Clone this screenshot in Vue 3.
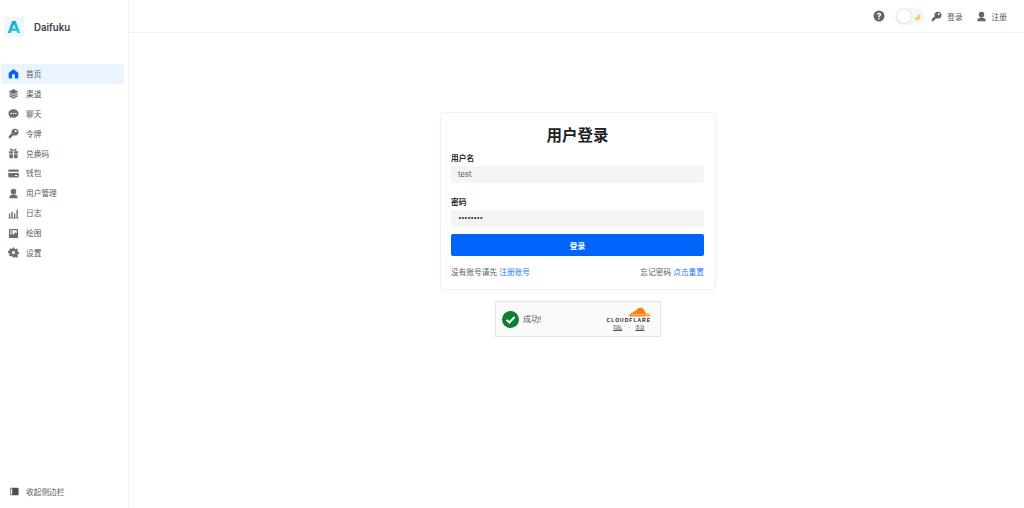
<script setup>
const nav = [
  { label: '首页', icon: 'home', active: true },
  { label: '渠道', icon: 'layers' },
  { label: '聊天', icon: 'chat' },
  { label: '令牌', icon: 'key' },
  { label: '兑换码', icon: 'gift' },
  { label: '钱包', icon: 'card' },
  { label: '用户管理', icon: 'user' },
  { label: '日志', icon: 'chart' },
  { label: '绘图', icon: 'image' },
  { label: '设置', icon: 'gear' },
]
const paths = {
  home: 'M12 2 1.500 11v10.500A1.500 1.500 0 0 0 3 23h6v-7a3 3 0 0 1 6 0v7h6a1.500 1.500 0 0 0 1.500-1.500V11z',
  layers: 'M12 2 1.500 8 12 14 22.500 8zM4.200 11.200 1.500 12.800 12 19l10.500-6.200-2.700-1.600L12 15.800zM4.200 15.900l-2.700 1.600L12 23.500l10.500-6-2.700-1.600L12 20.400z',
  chat: 'M12 2.500C5.900 2.500 1 6.600 1 11.800c0 2.600 1.200 4.900 3.200 6.600L3.500 22.500l4.600-2.100c1.200.4 2.500.6 3.900.6 6.100 0 11-4.100 11-9.200S18.100 2.500 12 2.500zM7 13.500a1.700 1.700 0 1 1 0-3.400 1.700 1.700 0 0 1 0 3.400zm5 0a1.700 1.700 0 1 1 0-3.400 1.700 1.700 0 0 1 0 3.400zm5 0a1.700 1.700 0 1 1 0-3.400 1.700 1.700 0 0 1 0 3.400z',
  key: 'M15 1.500a7.500 7.500 0 0 0-7.100 9.900L1.500 17.800V22.500h4.700v-2.800H9v-2.800h2.600l1-1A7.500 7.500 0 1 0 15 1.500zm2 7.500a2.200 2.200 0 1 1 0-4.400 2.200 2.200 0 0 1 0 4.400z',
  gift: 'M2 7h9v5H2zM13 7h9v5h-9zM3 13.500h8v9H4.500A1.500 1.500 0 0 1 3 21zM13 13.500h8V21a1.500 1.500 0 0 1-1.500 1.500H13zM7.500 1.500c1.800 0 3.500 1.500 4.500 4 1-2.500 2.700-4 4.500-4a2.200 2.200 0 0 1 1 4.200l-1.500.3H7l-1.500-.3a2.200 2.200 0 0 1 2-4.200z',
  card: 'M3 3.500h18A2.500 2.500 0 0 1 23.500 6v2H.5V6A2.500 2.500 0 0 1 3 3.500zM.5 11h23v7a2.500 2.500 0 0 1-2.500 2.500H3A2.500 2.500 0 0 1 .5 18zM15 15v2.500h5V15z',
  user: 'M12 1.500a6 6 0 0 1 6 6.500 6 6 0 0 1-12 0 6 6 0 0 1 6-6.500zM3 22.500V20c0-3 3-5.500 6-5.500h6c3 0 6 2.500 6 5.500v2.500z',
  chart: 'M2 12h3v9H2zM7.500 8h3v13h-3zM13 12h3v9h-3zM18.500 4h3v17h-3zM1 21.500h22v1.500H1z',
  image: 'M3.500 2h17A1.500 1.500 0 0 1 22 3.500v17a1.500 1.500 0 0 1-1.500 1.500h-17A1.500 1.500 0 0 1 2 20.500v-17A1.500 1.500 0 0 1 3.500 2zM5 5v10l4-4 3.500 3.500L16 9l3 3V5zM8 6.500a2 2 0 1 1 0 4 2 2 0 0 1 0-4z',
  gear: 'M10 1h4l.6 2.900 2.100.9 2.500-1.600 2.800 2.800-1.600 2.500.9 2.100 2.900.6v4l-2.900.6-.9 2.100 1.600 2.500-2.800 2.800-2.500-1.600-2.100.9L14 23h-4l-.6-2.900-2.100-.9-2.500 1.600L2 18l1.600-2.500-.9-2.100-2.900-.6v-4l2.900-.6.9-2.100L2 5.600 4.800 2.800l2.500 1.600 2.100-.9zM12 8.500a3.500 3.500 0 1 0 0 7 3.500 3.500 0 0 0 0-7z',
}
</script>

<template>
  <div class="page">
    <aside class="sidebar">
      <div class="brand">
        <div class="logo">
          <svg viewBox="0 0 20 20" width="14" height="14">
            <defs>
              <linearGradient id="lg" x1="0" y1="0" x2="1" y2="1">
                <stop offset="0" stop-color="#1d8fd8" />
                <stop offset="1" stop-color="#22dcd0" />
              </linearGradient>
            </defs>
            <path d="M7.500 1.500h5L19 18.500h-4.400l-1.100-3.200h-7L5.400 18.500H1zM10 6 7.700 12h4.600z" fill="url(#lg)" fill-rule="evenodd" />
          </svg>
        </div>
        <span class="brand-name">Daifuku</span>
      </div>
      <nav class="nav">
        <div v-for="item in nav" :key="item.label" class="nav-item" :class="{ active: item.active }">
          <svg class="nav-icon" viewBox="0 0 24 24" width="11" height="11">
            <path :d="paths[item.icon]" fill="currentColor" fill-rule="evenodd" />
          </svg>
          <span class="nav-text">{{ item.label }}</span>
        </div>
      </nav>
      <div class="collapse">
        <svg viewBox="0 0 12 12" width="9" height="9">
          <path d="M1.500 1h9a1 1 0 0 1 1 1v8a1 1 0 0 1-1 1h-9a1 1 0 0 1-1-1V2a1 1 0 0 1 1-1zM1.500 2v8H3V2z" fill="#4a4f55" fill-rule="evenodd" />
        </svg>
        <span>收起侧边栏</span>
      </div>
    </aside>
    <div class="main">
      <header class="topbar">
        <svg class="help" viewBox="0 0 24 24" width="12" height="12">
          <path d="M12 1a11 11 0 1 1 0 22 11 11 0 0 1 0-22zm-.2 4.500c-2.500 0-4.200 1.500-4.300 3.700h2.800c.1-.9.700-1.400 1.500-1.400s1.400.5 1.400 1.200c0 .7-.4 1.100-1.200 1.700-1.100.8-1.700 1.500-1.600 2.900v.7h2.700v-.5c0-.8.400-1.200 1.300-1.800 1.100-.8 1.900-1.700 1.900-3.200 0-2.100-1.800-3.300-4.500-3.300zM12 15.800a1.600 1.600 0 1 0 0 3.200 1.600 1.600 0 0 0 0-3.200z" fill="#62676d" fill-rule="evenodd" />
        </svg>
        <div class="toggle">
          <div class="knob"></div>
          <svg class="moon" viewBox="0 0 12 12" width="8" height="8">
            <path d="M7.500 1a5 5 0 1 1-6 6.500A5.500 5.500 0 0 0 7.500 1z" fill="#f2cf62" />
          </svg>
        </div>
        <div class="top-link key-link">
          <svg viewBox="0 0 24 24" width="11" height="11"><path :d="paths.key" fill="#62676d" fill-rule="evenodd" /></svg>
          <span>登录</span>
        </div>
        <div class="top-link">
          <svg viewBox="0 0 24 24" width="11" height="11"><path :d="paths.user" fill="#62676d" /></svg>
          <span>注册</span>
        </div>
      </header>
      <main class="content">
        <div class="card">
          <h1 class="title">用户登录</h1>
          <label class="label">用户名</label>
          <div class="input">test</div>
          <label class="label second">密码</label>
          <div class="input dots">••••••••</div>
          <button class="submit">登录</button>
          <div class="links">
            <span>没有账号请先 <a>注册账号</a></span>
            <span>忘记密码 <a>点击重置</a></span>
          </div>
        </div>
        <div class="turnstile">
          <svg viewBox="0 0 24 24" width="17" height="17">
            <circle cx="12" cy="12" r="12" fill="#0d8030" />
            <path d="M6.500 12.500 10.300 16.300 17.800 8.500" fill="none" stroke="#fff" stroke-width="2.800" />
          </svg>
          <span class="ok">成功!</span>
          <div class="cf">
            <svg viewBox="0 0 44 20" width="22" height="10">
              <path d="M33 19H3.500C1.800 19 .5 18 .5 16.500S2 14 3.500 14c.2-2 2.200-3 4-2.300C9 8.500 12 7 14 7.500 16 2.500 22 .5 26.500 2.500 29.500 3.800 31.500 6.500 32 10c1-.3 1-.3 1.500 0L33 19z" fill="#f6821f" />
              <path d="M30 19c1-3 3-6.500 7-6.500 3.500 0 6 2.500 6.500 6.500z" fill="#fbad41" />
              <path d="M5 15.300H30" stroke="#fff" stroke-width=".9" />
            </svg>
            <span class="cf-name">CLOUDFLARE</span>
            <span class="cf-links"><u>隐私</u><i>·</i><u>条款</u></span>
          </div>
        </div>
      </main>
    </div>
  </div>
</template>

<style>
html, body { margin: 0; padding: 0; background: #fff; }
</style>

<style scoped>
.page {
  display: flex;
  width: 1024px;
  height: 508px;
  overflow: hidden;
  font-family: "Inter", "Noto Sans CJK SC", sans-serif;
  color: #41464c;
  font-size: 7.7px;
}
.sidebar {
  width: 128px;
  flex: none;
  border-right: 1px solid #f1f2f3;
  display: flex;
  flex-direction: column;
}
.brand {
  display: flex;
  align-items: center;
  padding: 17px 0 0 4px;
  height: 20px;
}
.logo {
  width: 20px;
  height: 20px;
  background: #ecf8fc;
  display: flex;
  align-items: center;
  justify-content: center;
}
.brand-name {
  margin-left: 10px;
  font-size: 9.7px;
  font-weight: 600;
  color: #3a3f45;
}
.nav {
  margin-top: 27px;
  padding: 0 4px 0 1px;
  display: flex;
  flex-direction: column;
}
.nav-item {
  height: 19.9px;
  display: flex;
  align-items: center;
  padding-left: 7px;
  gap: 7px;
  border-radius: 2px;
  color: #55595f;
}
.nav-text { margin-bottom: 1px; }
.nav-icon { color: #6b7076; flex: none; }
.nav-item.active { background: #eaf4fe; }
.nav-item.active .nav-icon { color: #0064fa; }
.collapse {
  margin-top: auto;
  height: 16px;
  margin-bottom: 9px;
  padding-left: 10px;
  display: flex;
  align-items: center;
  gap: 7px;
  color: #55595f;
}
.main { flex: 1; display: flex; flex-direction: column; min-width: 0; }
.topbar {
  height: 32px;
  border-bottom: 1px solid #f1f2f3;
  display: flex;
  align-items: center;
  justify-content: flex-end;
  padding-right: 17px;
}
.help { margin-right: 10px; }
.toggle {
  position: relative;
  width: 30px;
  height: 17px;
  border-radius: 9px;
  background: #f6f7f7;
  margin-right: 6px;
}
.knob {
  position: absolute;
  left: 2px;
  top: 1px;
  width: 14px;
  height: 14px;
  border-radius: 50%;
  background: #fff;
  box-shadow: 0 0 3px rgba(0, 0, 0, .18);
}
.moon { position: absolute; right: 4px; top: 5px; }
.top-link { display: flex; align-items: center; gap: 5px; color: #55595f; }
.key-link { margin-right: 13px; }
.content {
  flex: 1;
  display: flex;
  flex-direction: column;
  align-items: center;
  padding: 79px 0 0 3px;
}
.card {
  width: 276px;
  height: 178px;
  box-sizing: border-box;
  border: 1px solid #f0f1f2;
  border-radius: 4px;
  padding: 12px 11px 0 10px;
  box-shadow: 0 0 2px rgba(0, 0, 0, .03);
  display: flex;
  flex-direction: column;
}
.title {
  margin: 0;
  text-align: center;
  font-size: 15.5px;
  line-height: 22px;
  font-weight: 700;
  color: #1c1f23;
}
.label {
  margin-top: 6px;
  height: 12px;
  line-height: 12px;
  font-weight: 600;
  color: #26292e;
  display: block;
}
.label.second { margin-top: 14px; }
.input {
  height: 17px;
  margin-top: 1px;
  line-height: 17px;
  background: #f3f4f4;
  border-radius: 2px;
  padding-left: 7px;
  color: #55595f;
}
.dots { letter-spacing: -.6px; font-size: 6.5px; color: #33383e; }
.submit {
  margin-top: 7px;
  height: 22px;
  border: 0;
  border-radius: 2px;
  background: #0064fa;
  color: #fff;
  font: 600 7.7px "Inter", "Noto Sans CJK SC", sans-serif;
}
.links {
  margin-top: 11px;
  display: flex;
  justify-content: space-between;
  line-height: 12px;
  color: #55595f;
}
.links a { color: #2a7bf5; }
.turnstile {
  width: 166px;
  height: 36px;
  box-sizing: border-box;
  margin-top: 11px;
  border: 1px solid #e4e4e4;
  background: #fafafa;
  display: flex;
  align-items: center;
  padding: 0 9px 0 6px;
}
.ok { margin-left: 4px; color: #555; font-size: 8px; margin-bottom: 2px; }
.cf {
  margin-left: auto;
  display: flex;
  flex-direction: column;
  align-items: center;
  line-height: 1;
}
.cf svg { align-self: flex-end; }
.cf-name { font: 700 5px "Liberation Sans", sans-serif; letter-spacing: 1px; color: #222; }
.cf-links { font-size: 4.500px; color: #555; margin-top: 3px; display: flex; gap: 6px; }
.cf-links i { font-style: normal; }
</style>
